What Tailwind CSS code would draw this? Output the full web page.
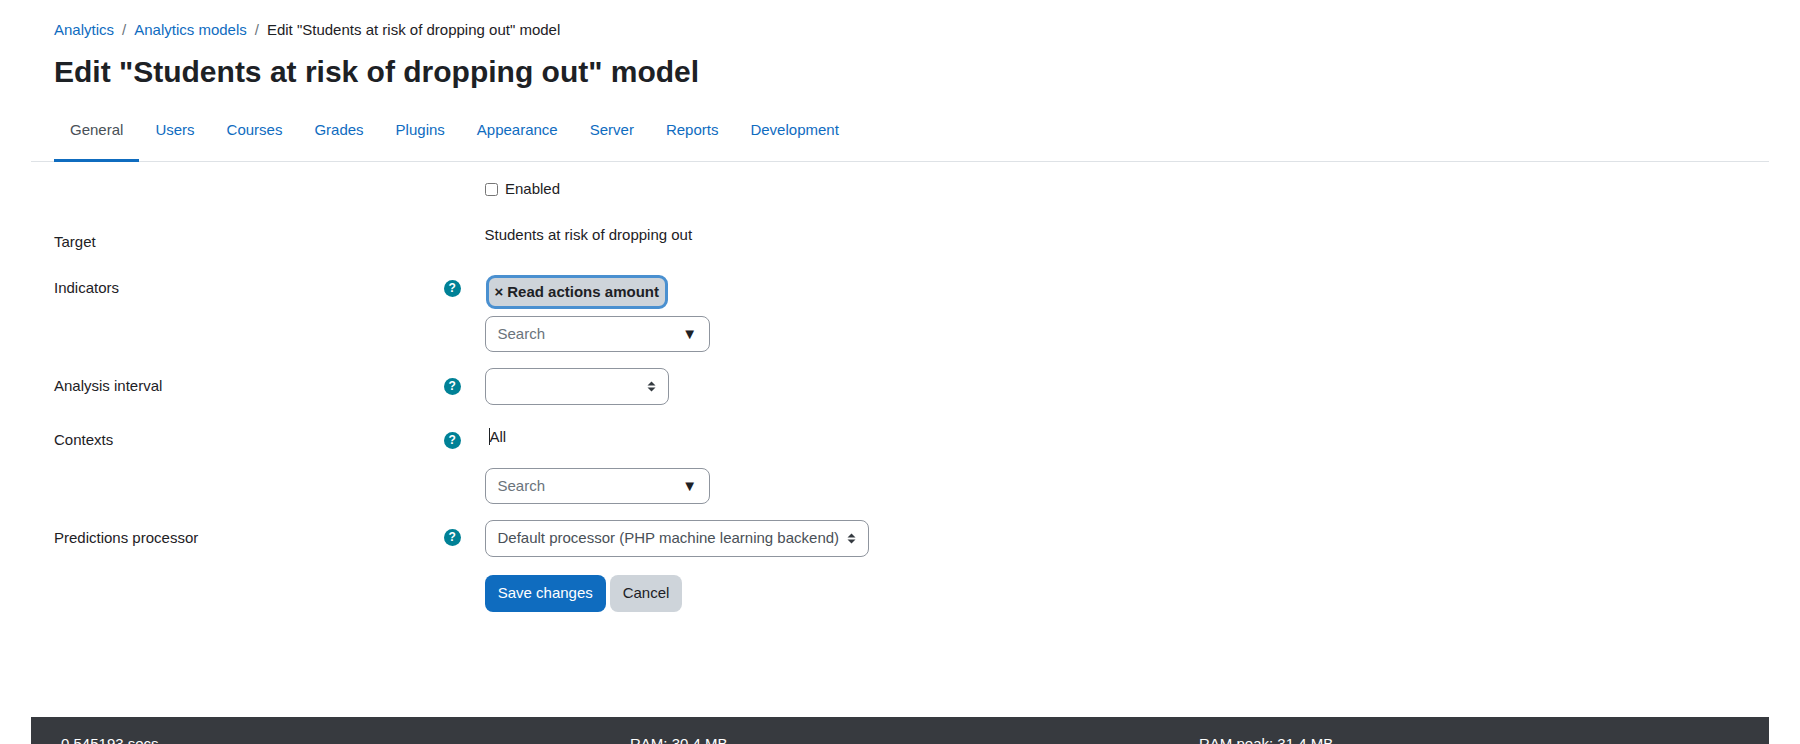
<!DOCTYPE html>
<html lang="en">
<head>
    <meta charset="UTF-8">
    <title>Edit "Students at risk of dropping out" model</title>
    <script src="https://cdn.jsdelivr.net/npm/@tailwindcss/browser@4"></script>
</head>
<body class="bg-white h-[744px] overflow-hidden font-['Liberation_Sans',Arial,sans-serif] text-[15px] leading-[22.5px] text-[#1d2125]">
    <div class="mx-[31px]">
        <!-- Header -->
        <div class="px-[23px] pt-[19px]">
            <div class="flex items-center h-[22px]">
                <a class="text-[#0f6cbf]">Analytics</a>
                <span class="px-[8px] text-[#6a737b]">/</span>
                <a class="text-[#0f6cbf]">Analytics models</a>
                <span class="px-[8px] text-[#6a737b]">/</span>
                <span>Edit "Students at risk of dropping out" model</span>
            </div>
            <h1 class="mt-[13px] text-[30px] leading-[36px] font-bold">Edit "Students at risk of dropping out" model</h1>
        </div>

        <!-- Tabs -->
        <div class="mt-[14px] flex h-[58px] px-[23px] border-b border-[#dee2e6]">
            <a class="flex items-center h-[58px] px-[16px] pb-[2px] border-b-[3px] border-[#0f6cbf] text-[#495057]">General</a>
            <a class="flex items-center h-[58px] px-[16px] pb-[2px] border-b-[3px] border-transparent text-[#0f6cbf]">Users</a>
            <a class="flex items-center h-[58px] px-[16px] pb-[2px] border-b-[3px] border-transparent text-[#0f6cbf]">Courses</a>
            <a class="flex items-center h-[58px] px-[16px] pb-[2px] border-b-[3px] border-transparent text-[#0f6cbf]">Grades</a>
            <a class="flex items-center h-[58px] px-[16px] pb-[2px] border-b-[3px] border-transparent text-[#0f6cbf]">Plugins</a>
            <a class="flex items-center h-[58px] px-[16px] pb-[2px] border-b-[3px] border-transparent text-[#0f6cbf]">Appearance</a>
            <a class="flex items-center h-[58px] px-[16px] pb-[2px] border-b-[3px] border-transparent text-[#0f6cbf]">Server</a>
            <a class="flex items-center h-[58px] px-[16px] pb-[2px] border-b-[3px] border-transparent text-[#0f6cbf]">Reports</a>
            <a class="flex items-center h-[58px] px-[16px] pb-[2px] border-b-[3px] border-transparent text-[#0f6cbf]">Development</a>
        </div>

        <!-- Form -->
        <form class="px-[23px] h-[555px]">
            <div class="pl-[431px] pt-[16px] h-[64px]">
                <label class="flex items-center h-[22px] gap-[7px]">
                    <span class="w-[13px] h-[13px] rounded-[2.5px] border border-[#767676] bg-white"></span>
                    <span>Enabled</span>
                </label>
            </div>

            <div class="flex h-[50px]">
                <div class="w-[431px] pt-[5px]">Target</div>
                <div class="-mt-[2px] -ml-[0.5px]">Students at risk of dropping out</div>
            </div>

            <div class="flex h-[80px]">
                <div class="w-[390px] pt-[1px]">Indicators</div>
                <div class="w-[41px] pt-[4px]">
                    <span class="flex items-center justify-center w-[16.5px] h-[16.5px] rounded-full bg-[#008196] text-white text-[12px] leading-none font-bold">?</span>
                </div>
                <div>
                    <span class="flex items-center w-[182px] h-[34px] ml-[1px] mt-[-1px] pl-[5.5px] pr-[6px] rounded-[9px] border-[3px] border-[#4a90d0] bg-[#ced4da] font-bold whitespace-nowrap"><span class="text-[15px] mr-[4px]">×</span>Read actions amount</span>
                    <div class="mt-[7px] flex items-center justify-between w-[225px] h-[36px] pl-[11.5px] pr-[12px] rounded-[8px] border border-[#8f959e] text-[#6a737b]">
                        <span>Search</span>
                        <span class="text-[#1d2125] text-[15px]">▼</span>
                    </div>
                </div>
            </div>

            <div class="flex h-[52px] mt-[12px]">
                <div class="w-[390px] pt-[7px]">Analysis interval</div>
                <div class="w-[41px] pt-[10px]">
                    <span class="flex items-center justify-center w-[16.5px] h-[16.5px] rounded-full bg-[#008196] text-white text-[12px] leading-none font-bold">?</span>
                </div>
                <div class="flex items-center justify-end w-[184px] h-[37px] pr-[12px] rounded-[8px] border border-[#8f959e]">
                    <svg width="9" height="11" viewBox="0 0 9 11" class="text-[#343a40]"><path fill="currentColor" d="M4.5 0.5 8.5 4.5H0.5ZM0.5 6.5H8.5L4.5 10.5Z"/></svg>
                </div>
            </div>

            <div class="flex h-[100px]">
                <div class="w-[390px] pt-[9px]">Contexts</div>
                <div class="w-[41px] pt-[12px]">
                    <span class="flex items-center justify-center w-[16.5px] h-[16.5px] rounded-full bg-[#008196] text-white text-[12px] leading-none font-bold">?</span>
                </div>
                <div>
                    <div class="h-[48px] pt-[6px] pl-[3.5px]"><span class="border-l border-[#1d2125]">All</span></div>
                    <div class="flex items-center justify-between w-[225px] h-[36px] pl-[11.5px] pr-[12px] rounded-[8px] border border-[#8f959e] text-[#6a737b]">
                        <span>Search</span>
                        <span class="text-[#1d2125] text-[15px]">▼</span>
                    </div>
                </div>
            </div>

            <div class="flex h-[55px]">
                <div class="w-[390px] pt-[7px]">Predictions processor</div>
                <div class="w-[41px] pt-[9px]">
                    <span class="flex items-center justify-center w-[16.5px] h-[16.5px] rounded-full bg-[#008196] text-white text-[12px] leading-none font-bold">?</span>
                </div>
                <div class="flex items-center justify-between w-[384px] h-[37px] pl-[11.5px] pr-[12px] rounded-[8px] border border-[#8f959e] text-[#495057] whitespace-nowrap">
                    <span>Default processor (PHP machine learning backend)</span>
                    <svg width="9" height="11" viewBox="0 0 9 11" class="text-[#343a40]"><path fill="currentColor" d="M4.5 0.5 8.5 4.5H0.5ZM0.5 6.5H8.5L4.5 10.5Z"/></svg>
                </div>
            </div>

            <div class="pl-[431px] flex gap-[4px]">
                <button type="button" class="w-[120.5px] h-[37px] rounded-[8px] bg-[#0f6cbf] text-white">Save changes</button>
                <button type="button" class="w-[72px] h-[37px] ml-[0.5px] rounded-[8px] bg-[#ced4da] text-[#1d2125]">Cancel</button>
            </div>
        </form>

        <!-- Footer -->
        <footer class="h-[200px] bg-[#373a3f] text-white px-[30px] pt-[16px]">
            <div class="grid grid-cols-[569px_569px_1fr]">
                <div>0.545193 secs</div>
                <div>RAM: 30.4 MB</div>
                <div>RAM peak: 31.4 MB</div>
            </div>
        </footer>
    </div>
</body>
</html>
